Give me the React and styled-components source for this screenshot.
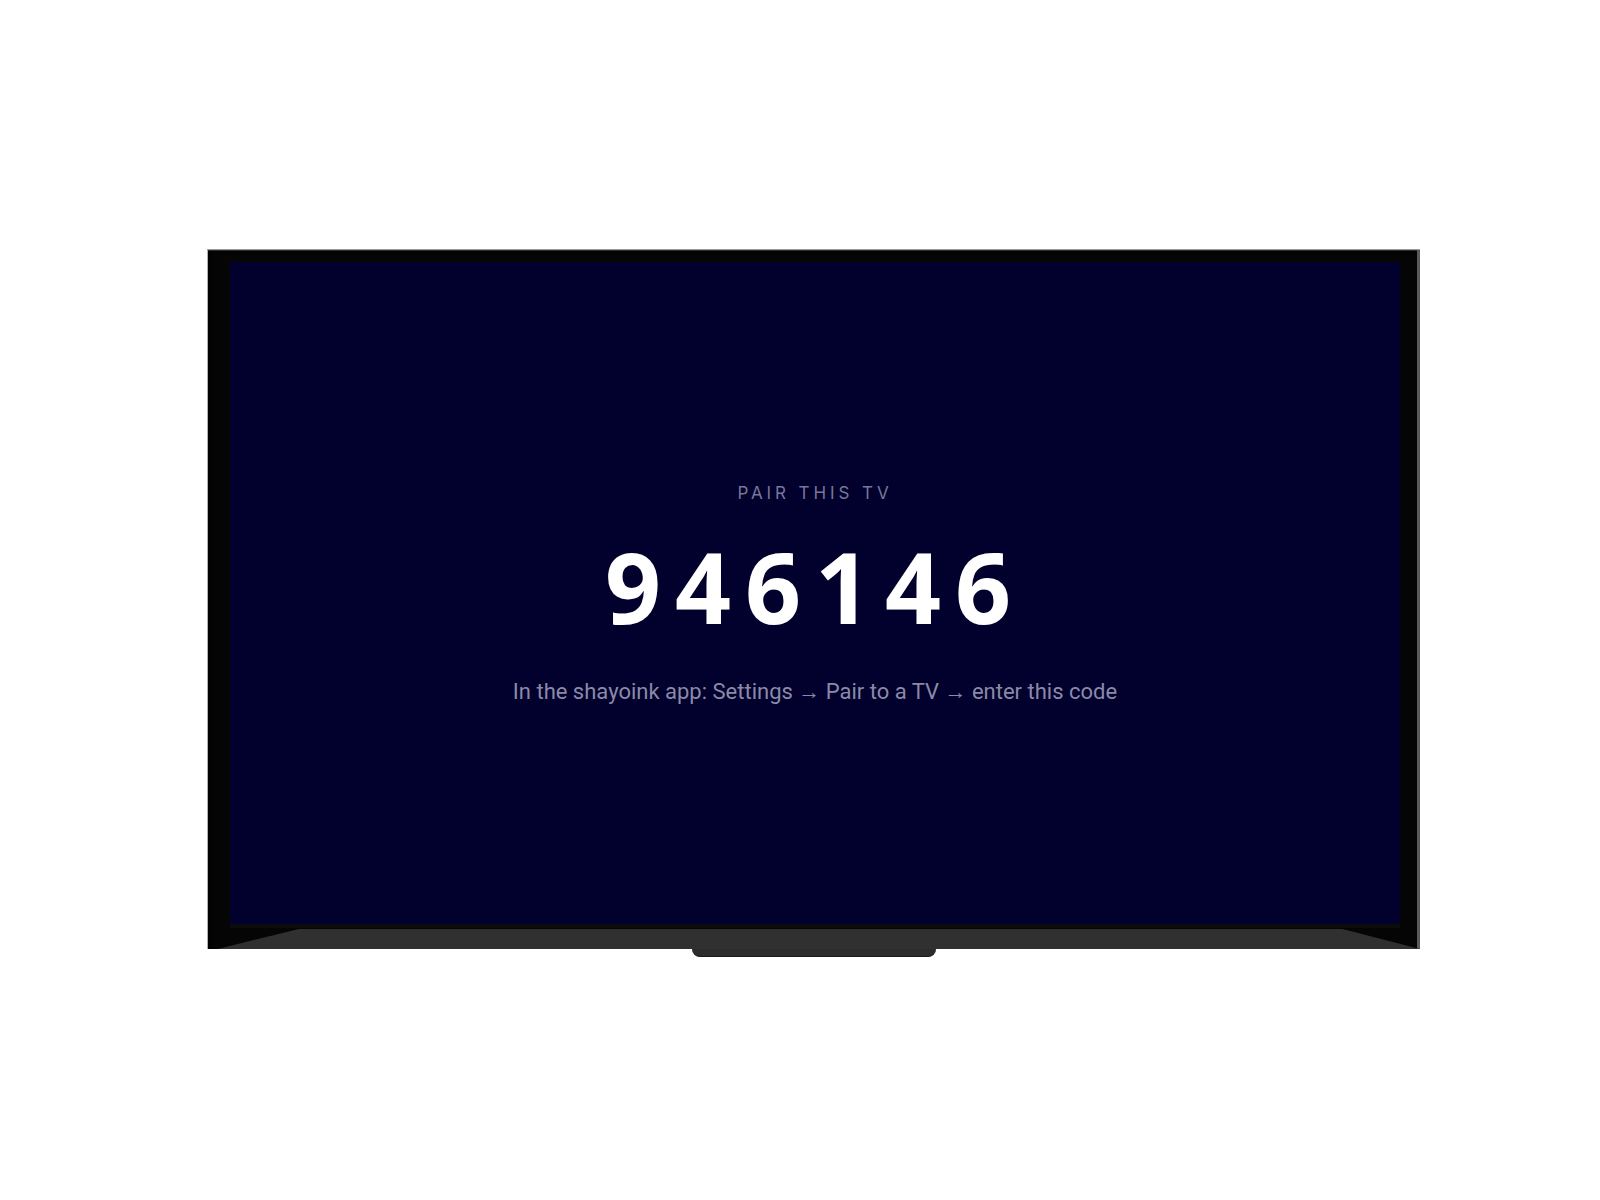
import React from 'react'
import styled, { createGlobalStyle } from 'styled-components'

const GlobalStyle = createGlobalStyle`
  * { box-sizing: border-box; }
  html, body { margin: 0; padding: 0; background: #ffffff; }
  body { font-family: Roboto, "Liberation Sans", sans-serif; }
`

const Page = styled.div`
  width: 1600px;
  height: 1200px;
  padding: 249px 0 0 207px;
  background: #ffffff;
`

const Tv = styled.div`
  width: 1213px;
  display: flex;
  flex-direction: column;
  align-items: center;
`

const Frame = styled.div`
  width: 100%;
  height: 700px;
  display: flex;
  flex-direction: column;
  padding: 12px 20px 0 22px;
  background: #050505;
  border-top: 1px solid #9a9a9a;
  border-left: 1px solid #b0b0b0;
  box-shadow: inset -3px 0 0 #5a5a5a, inset 0 1px 0 #2a2a2a, inset 8px 0 10px -6px #000;
`

const Screen = styled.div`
  height: 662px;
  background: #02002c;
  display: flex;
  flex-direction: column;
  align-items: center;
  justify-content: center;
  box-shadow: 0 4px 0 #0c0c0c;
`

const Label = styled.div`
  font-family: Inter, Roboto, sans-serif;
  font-size: 17px;
  font-weight: 400;
  letter-spacing: 0.23em;
  color: #77779a;
  text-transform: uppercase;
  margin-top: 2px;
`

const Code = styled.div`
  font-family: "Open Sans", "Noto Sans", sans-serif;
  font-size: 98px;
  font-weight: 700;
  letter-spacing: 14px;
  color: #ffffff;
  line-height: 1;
  margin-top: 34px;
`

const Hint = styled.div`
  font-family: Roboto, "Liberation Sans", sans-serif;
  font-size: 22px;
  color: #8a8aa8;
  margin-top: 44px;
`

const Chin = styled.div`
  flex: 1;
  margin: 0 -20px 0 -22px;
  display: flex;
  flex-direction: column;
  justify-content: flex-end;
`

const ChinPanel = styled.div`
  height: 20px;
  background: #303030;
  clip-path: polygon(7.5% 0, 93.6% 0, 100% 100%, 0.8% 100%);
`

const Stand = styled.div`
  width: 244px;
  height: 8px;
  margin-left: 1px;
  background: #2c2c2c;
  border-radius: 0 0 9px 9px;
  border-bottom: 1px solid #1a1a1a;
`

export default function App() {
  return (
    <>
      <GlobalStyle />
      <Page>
        <Tv>
          <Frame>
            <Screen>
              <Label>Pair this TV</Label>
              <Code>946146</Code>
              <Hint>In the shayoink app: Settings → Pair to a TV → enter this code</Hint>
            </Screen>
            <Chin>
              <ChinPanel />
            </Chin>
          </Frame>
          <Stand />
        </Tv>
      </Page>
    </>
  )
}
